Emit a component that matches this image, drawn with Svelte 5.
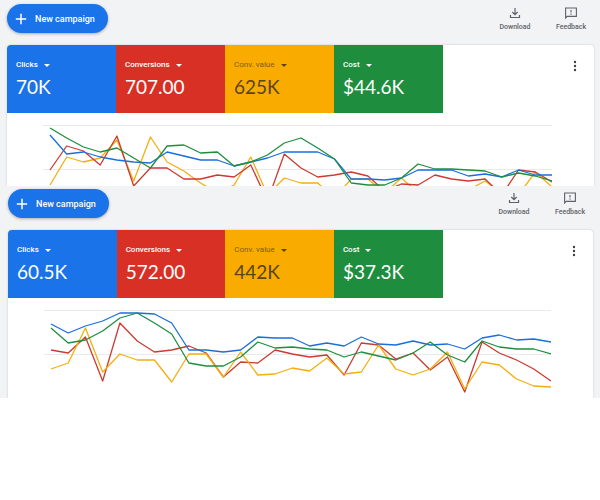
<script lang="ts">
	const PLOT_WIDTH = 509;
	const FIRST_X = 7;

	const colors = {
		cost: '#1e8e3e',
		clicks: '#1a6fdc',
		conversions: '#cc3a30',
		value: '#f5ae10'
	};

	// Series values are distances below the top grid line
	const panels = [
		{
			id: 'current',
			height: 61,
			tiles: [
				{ name: 'Clicks', value: '70K', tone: 'blue' },
				{ name: 'Conversions', value: '707.00', tone: 'red' },
				{ name: 'Conv. value', value: '625K', tone: 'yellow' },
				{ name: 'Cost', value: '$44.6K', tone: 'green' }
			],
			series: [
				{ color: colors.value, data: [60, 32, 37, 33, 15, 56, 12, 37, 46, 58, 68, 60, 32, 70, 53, 58, 58, 73, 54, 54, 68, 53, 68, 70, 70, 65, 56, 68, 70, 47, 62] },
				{ color: colors.conversions, data: [45, 21, 26, 40, 11, 61, 43, 43, 54, 54, 50, 52, 40, 76, 29, 43, 52, 50, 47, 51, 66, 59, 60, 50, 54, 56, 54, 70, 45, 47, 57] },
				{ color: colors.clicks, data: [10, 29, 27, 32, 35, 37, 38, 27, 31, 35, 35, 41, 37, 33, 27, 27, 27, 34, 54, 54, 55, 53, 45, 45, 45, 51, 49, 52, 45, 50, 50] },
				{ color: colors.cost, data: [3, 13, 22, 27, 23, 33, 43, 21, 20, 28, 27, 41, 37, 30, 18, 13, 23, 34, 58, 60, 60, 53, 39, 44, 44, 45, 46, 52, 48, 51, 56] }
			]
		},
		{
			id: 'previous',
			height: 88,
			tiles: [
				{ name: 'Clicks', value: '60.5K', tone: 'blue' },
				{ name: 'Conversions', value: '572.00', tone: 'red' },
				{ name: 'Conv. value', value: '442K', tone: 'yellow' },
				{ name: 'Cost', value: '$37.3K', tone: 'green' }
			],
			series: [
				{ color: colors.conversions, data: [40, 43, 27, 71, 13, 31, 42, 40, 36, 43, 67, 52, 53, 40, 44, 47, 45, 65, 33, 35, 49, 43, 60, 47, 82, 32, 43, 50, 59, 71] },
				{ color: colors.value, data: [59, 53, 18, 62, 44, 50, 50, 72, 44, 44, 67, 42, 65, 64, 58, 61, 48, 64, 62, 35, 59, 65, 59, 42, 79, 52, 55, 69, 76, 77] },
				{ color: colors.clicks, data: [14, 23, 16, 11, 3, 3, 4, 13, 40, 40, 42, 40, 27, 28, 28, 36, 33, 36, 27, 34, 35, 31, 35, 34, 39, 28, 25, 30, 29, 32] },
				{ color: colors.cost, data: [18, 33, 30, 21, 8, 3, 13, 24, 53, 56, 56, 47, 32, 38, 37, 39, 40, 47, 42, 46, 50, 43, 32, 45, 52, 31, 37, 39, 39, 44] }
			]
		}
	];

	function toPoints(data: number[]) {
		const step = (PLOT_WIDTH - FIRST_X) / (data.length - 1);
		return data.map((y, i) => `${(FIRST_X + i * step).toFixed(1)},${y}`).join(' ');
	}
</script>

<main>
	{#each panels as panel}
		<section class="panel {panel.id}">
			<header class="toolbar">
				<button class="new-campaign">
					<svg viewBox="0 0 12 12" width="12" height="12" aria-hidden="true">
						<path d="M6 .8v10.4M.8 6h10.4" fill="none" stroke="#fff" stroke-width="1.5" />
					</svg>
					New campaign
				</button>
				<div class="actions">
					<button class="action">
						<svg viewBox="0 0 12 12" width="12" height="12" aria-hidden="true">
							<path d="M6 1v6.5M3.3 5 6 7.7 8.7 5M1.5 8v2.5h9V8" fill="none" stroke="#5f6368" stroke-width="1.2" />
						</svg>
						Download
					</button>
					<button class="action">
						<svg viewBox="0 0 12 12" width="12" height="12" aria-hidden="true">
							<path d="M.6 11V1h10.8v8.4H2.2z" fill="none" stroke="#5f6368" stroke-width="1.1" />
							<path d="M6 3v2.6M6 6.6v1.2" fill="none" stroke="#5f6368" stroke-width="1.1" />
						</svg>
						Feedback
					</button>
				</div>
			</header>

			<div class="card">
				<div class="summary">
					{#each panel.tiles as tile}
						<button class="tile {tile.tone}">
							<span class="name">{tile.name} <i class="caret"></i></span>
							<span class="value">{tile.value}</span>
						</button>
					{/each}
					<button class="more" aria-label="More options">
						<svg viewBox="0 0 4 12" width="4" height="12" aria-hidden="true">
							<circle cx="2" cy="2" r="1.2" />
							<circle cx="2" cy="6" r="1.2" />
							<circle cx="2" cy="10" r="1.2" />
						</svg>
					</button>
				</div>
				<div class="chart">
					<svg viewBox="0 0 {PLOT_WIDTH} {panel.height}" height={panel.height} preserveAspectRatio="none" aria-hidden="true">
						<path class="grid" d="M0 .5H{PLOT_WIDTH}M0 44.5H{PLOT_WIDTH}" />
						{#each panel.series as line}
							<polyline points={toPoints(line.data)} stroke={line.color} />
						{/each}
					</svg>
				</div>
			</div>
		</section>
	{/each}
</main>

<style>
	:global(body) {
		margin: 0;
		background: #fff;
	}

	main {
		padding-top: 1px;
		background: #f1f3f4;
		font-family: Roboto, "Liberation Sans", sans-serif;
	}

	button {
		margin: 0;
		padding: 0;
		border: 0;
		background: none;
		font: inherit;
		cursor: pointer;
	}

	.panel {
		padding: 0 6px 0 7px;
		overflow: hidden;
	}

	.panel.previous {
		padding: 0 7px 0 8px;
	}

	.toolbar {
		display: flex;
		justify-content: space-between;
		align-items: flex-start;
		box-sizing: border-box;
		height: 44px;
		padding-top: 3px;
	}

	.new-campaign {
		display: flex;
		align-items: center;
		gap: 8px;
		height: 29px;
		padding: 0 13px 0 8px;
		border-radius: 15px;
		background: #1a73e8;
		box-shadow: 0 1px 3px rgba(60, 64, 67, 0.4);
		color: #fff;
		font-size: 9px;
		font-weight: 500;
	}

	.actions {
		display: flex;
		gap: 16px;
		padding: 3px 3px 0 0;
	}

	.action {
		display: flex;
		flex-direction: column;
		align-items: center;
		gap: 4px;
		width: 40px;
		color: #5f6368;
		font-size: 7px;
		font-weight: 500;
		line-height: 8px;
	}

	.card {
		border-radius: 4px 4px 0 0;
		background: #fff;
		box-shadow: 0 0 2px rgba(60, 64, 67, 0.25);
		overflow: hidden;
	}

	.summary {
		display: grid;
		grid-template-columns: repeat(4, minmax(0, 109fr)) minmax(0, 151fr);
		height: 68px;
	}

	.tile {
		display: flex;
		flex-direction: column;
		align-items: flex-start;
		gap: 4px;
		padding: 14px 0 0 9px;
		color: #fff;
	}

	.name {
		display: flex;
		align-items: center;
		gap: 6px;
		font-size: 8px;
		font-weight: 500;
		line-height: 12px;
	}

	.value {
		font-family: Lato, Roboto, sans-serif;
		font-size: 19px;
		line-height: 24px;
	}

	.caret {
		border: 3px solid transparent;
		border-top-color: currentColor;
		border-bottom: 0;
	}

	.blue {
		background: #1a73e8;
	}

	.red {
		background: #d93025;
	}

	.yellow {
		background: #f9ab00;
		color: #594416;
	}

	.yellow .name {
		color: #80601a;
		font-weight: 400;
	}

	.yellow .caret {
		color: #594416;
	}

	.green {
		background: #1e8e3e;
	}

	.more {
		justify-self: end;
		align-self: start;
		margin: 15px 17px 0 0;
		line-height: 0;
		fill: #3c4043;
	}

	.chart {
		padding: 12px 42px 0 36px;
	}

	.chart svg {
		display: block;
		width: 100%;
	}

	.grid {
		stroke: #e8eaed;
	}

	polyline {
		fill: none;
		stroke-width: 1.3;
		stroke-linejoin: round;
	}
</style>
